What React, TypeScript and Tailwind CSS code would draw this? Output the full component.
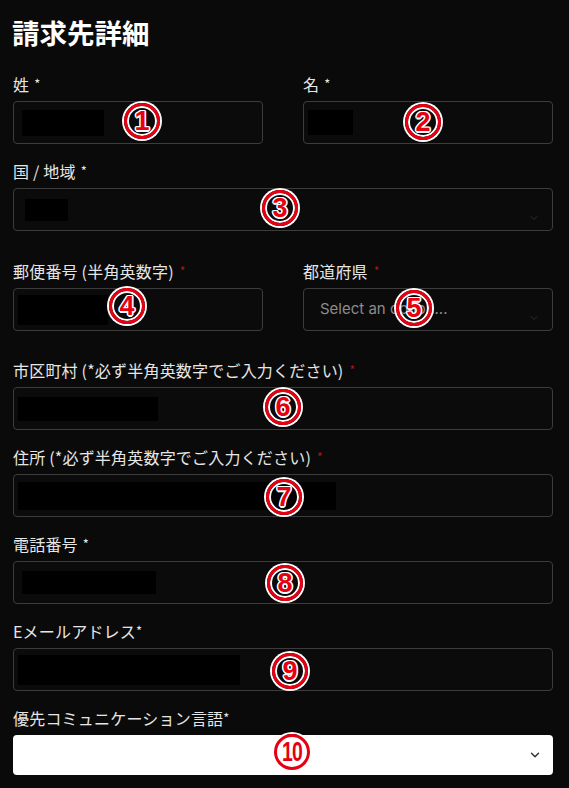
import { ChevronDown } from "lucide-react";

type Star = "white" | "red" | "tight";

const markers = [
    { n: "1", pos: "left-[124px] top-[103px]" },
    { n: "2", pos: "left-[405px] top-[104px]" },
    { n: "3", pos: "left-[262px] top-[190px]" },
    { n: "4", pos: "left-[109px] top-[288px]" },
    { n: "5", pos: "left-[396px] top-[290px]" },
    { n: "6", pos: "left-[265px] top-[389px]" },
    { n: "7", pos: "left-[266px] top-[479px]" },
    { n: "8", pos: "left-[267px] top-[565px]" },
    { n: "9", pos: "left-[272px] top-[653px]" },
    { n: "10", pos: "left-[274px] top-[734px]" },
];

const Label = ({ text, star }: { text: string; star: Star }) => (
    <div className="h-[22px] mb-[6px] leading-[22px] text-[16px] font-normal tracking-[0.2px] text-[#e6e6e6] whitespace-nowrap">
        {text}
        {star === "white" && <span className="ml-[5px] text-[13px] align-top">*</span>}
        {star === "tight" && <span className="text-[13px] align-top">*</span>}
        {star === "red" && <span className="ml-[6px] text-[12px] align-top text-[#b3121b]">*</span>}
    </div>
);

const Redact = ({ cls }: { cls: string }) => <div className={`bg-black shrink-0 ${cls}`} />;

const Box = ({ children, chevron }: { children?: React.ReactNode; chevron?: boolean }) => (
    <div className="h-[43px] rounded-[4px] border border-[#3c3c3c] bg-[#0b0b0b] flex items-center pr-[12px]">
        {children}
        {chevron && (
            <div className="ml-auto pt-[16px]">
                <ChevronDown size={12} strokeWidth={2} color="#2e2e2e" />
            </div>
        )}
    </div>
);

const Marker = ({ n, pos }: { n: string; pos: string }) => (
    <div
        className={`absolute ${pos} w-[36px] h-[36px] rounded-full border-[3px] border-[#e60012] shadow-[0_0_0_2px_#fff,inset_0_0_0_2px_#fff] flex items-center justify-center`}
    >
        <span
            className={`font-['Liberation_Sans',sans-serif] font-bold text-[27px] leading-none text-[#e60012] [text-shadow:1.5px_0_#fff,-1.5px_0_#fff,0_1.5px_#fff,0_-1.5px_#fff,1px_1px_#fff,-1px_-1px_#fff,1px_-1px_#fff,-1px_1px_#fff] ${n === "10" ? "scale-x-[0.72] tracking-[-1px]" : ""}`}
        >
            {n}
        </span>
    </div>
);

const App = () => {
    return (
        <div className="w-full min-h-[788px] bg-[#0a0a0a] font-['Noto_Sans_CJK_JP',sans-serif]">
            <div className="relative pl-[13px] pr-[16px] pt-[14px]">
                <h1 className="text-[27.5px] font-bold leading-[36px] text-white ml-[-1px]">請求先詳細</h1>

                <div className="mt-[23px] grid grid-cols-2 gap-[40px]">
                    <div>
                        <Label text="姓" star="white" />
                        <Box><Redact cls="ml-[8px] w-[82px] h-[26px]" /></Box>
                    </div>
                    <div>
                        <Label text="名" star="white" />
                        <Box><Redact cls="ml-[4px] w-[45px] h-[25px]" /></Box>
                    </div>
                </div>

                <div className="mt-[16px]">
                    <Label text="国 / 地域" star="white" />
                    <Box chevron><Redact cls="ml-[11px] w-[43px] h-[22px]" /></Box>
                </div>

                <div className="mt-[29px] grid grid-cols-2 gap-[40px]">
                    <div>
                        <Label text="郵便番号 (半角英数字)" star="red" />
                        <Box><Redact cls="ml-[4px] w-[90px] h-[30px]" /></Box>
                    </div>
                    <div>
                        <Label text="都道府県" star="red" />
                        <Box chevron>
                            <span className="ml-[16px] font-['Inter',sans-serif] text-[15px] text-[#8c8c8c]">Select an option...</span>
                        </Box>
                    </div>
                </div>

                <div className="mt-[28px]">
                    <Label text="市区町村 (*必ず半角英数字でご入力ください)" star="red" />
                    <Box><Redact cls="ml-[4px] w-[140px] h-[24px]" /></Box>
                </div>

                <div className="mt-[16px]">
                    <Label text="住所 (*必ず半角英数字でご入力ください)" star="red" />
                    <Box><Redact cls="ml-[4px] w-[318px] h-[28px]" /></Box>
                </div>

                <div className="mt-[16px]">
                    <Label text="電話番号" star="white" />
                    <Box><Redact cls="ml-[8px] w-[134px] h-[23px]" /></Box>
                </div>

                <div className="mt-[16px]">
                    <Label text="Eメールアドレス" star="tight" />
                    <Box><Redact cls="ml-[4px] w-[222px] h-[30px]" /></Box>
                </div>

                <div className="mt-[16px]">
                    <Label text="優先コミュニケーション言語" star="tight" />
                    <div className="h-[40px] rounded-[4px] bg-white flex items-center justify-end pr-[11px]">
                        <ChevronDown size={14} strokeWidth={2.5} color="#333" />
                    </div>
                </div>

                {markers.map((m) => (
                    <Marker key={m.n} n={m.n} pos={m.pos} />
                ))}
            </div>
        </div>
    );
};

export default App;
